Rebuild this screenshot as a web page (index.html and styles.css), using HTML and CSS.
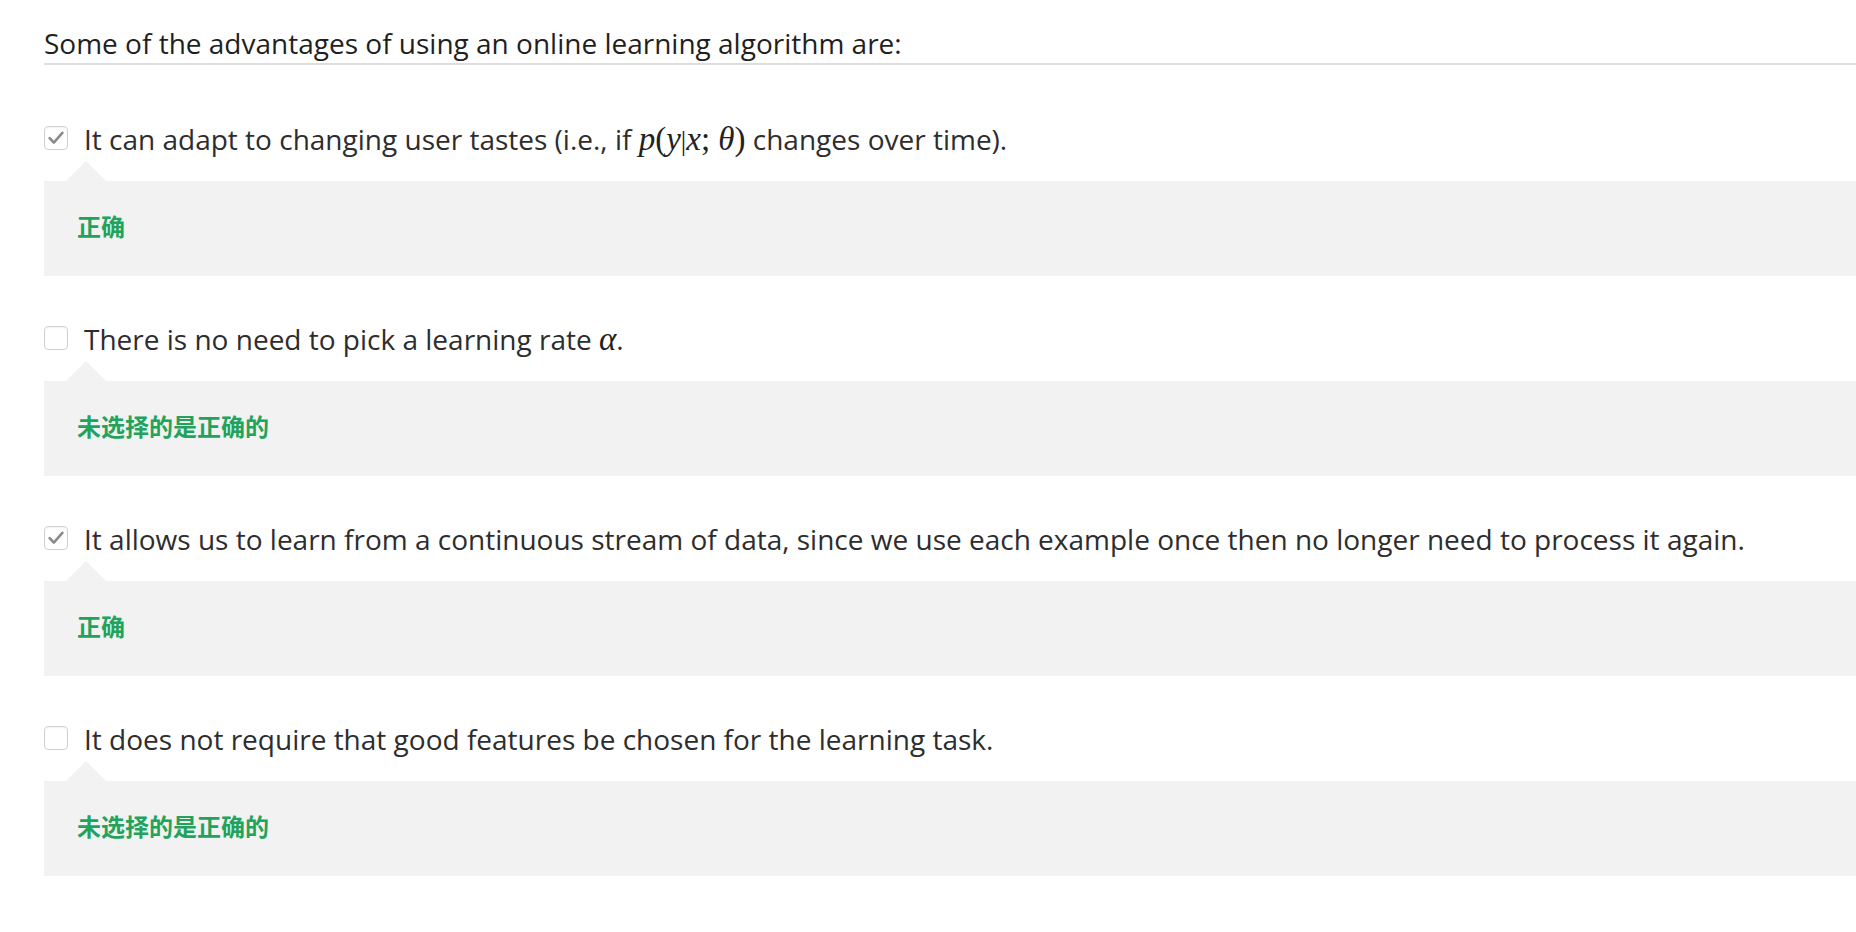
FILE: index.html
```html
<!DOCTYPE html>
<html lang="en">
<head>
<meta charset="utf-8">
<title>Quiz</title>
<link rel="stylesheet" href="styles.css">
</head>
<body>
<div class="page">
  <div class="question">Some of the advantages of using an online learning algorithm are:</div>

  <div class="option">
    <div class="option-row">
      <span class="checkbox"><svg viewBox="1 1 22 22" width="22" height="22"><path d="M5.6 12.2 L9.8 16.6 L18.4 6.8" fill="none" stroke="#8a8a8a" stroke-width="2.6" stroke-linecap="round" stroke-linejoin="round"/></svg></span>
      <span class="option-text">It can adapt to changing user tastes (i.e., if <span class="math"><i>p</i>(<i>y</i><span class="bar">|</span><i>x</i>; <i>θ</i>)</span> changes over time).</span>
    </div>
    <div class="feedback">正确</div>
  </div>

  <div class="option">
    <div class="option-row">
      <span class="checkbox"></span>
      <span class="option-text">There is no need to pick a learning rate <span class="math"><i>α</i></span>.</span>
    </div>
    <div class="feedback">未选择的是正确的</div>
  </div>

  <div class="option">
    <div class="option-row">
      <span class="checkbox"><svg viewBox="1 1 22 22" width="22" height="22"><path d="M5.6 12.2 L9.8 16.6 L18.4 6.8" fill="none" stroke="#8a8a8a" stroke-width="2.6" stroke-linecap="round" stroke-linejoin="round"/></svg></span>
      <span class="option-text">It allows us to learn from a continuous stream of data, since we use each example once then no longer need to process it again.</span>
    </div>
    <div class="feedback">正确</div>
  </div>

  <div class="option">
    <div class="option-row">
      <span class="checkbox"></span>
      <span class="option-text">It does not require that good features be chosen for the learning task.</span>
    </div>
    <div class="feedback">未选择的是正确的</div>
  </div>
</div>
</body>
</html>
```

FILE: styles.css
```css
html, body {
  margin: 0;
  padding: 0;
  background: #ffffff;
}

body {
  font-family: "Open Sans", "Noto Sans", "Noto Sans CJK SC", sans-serif;
  color: #333333;
  overflow: hidden;
}

.page {
  padding-left: 44px;
}

.question {
  font-size: 28px;
  line-height: 38px;
  color: #1f1f1f;
  padding-top: 24px;
  padding-bottom: 1px;
  border-bottom: 2px solid #dddddd;
  margin-bottom: 54px;
}

.option {
  margin-bottom: 43px;
}

.option-row {
  display: flex;
  align-items: flex-start;
  gap: 16px;
  font-size: 28px;
  line-height: 38px;
  height: 38px;
  color: #2d2d2d;
  padding-top: 1px;
}

.checkbox {
  flex: none;
  box-sizing: border-box;
  width: 24px;
  height: 24px;
  margin-top: 6px;
  border: 1px solid #d2d2d2;
  border-radius: 4px;
  background: #ffffff;
  box-shadow: inset 0 1px 2px rgba(0, 0, 0, 0.06);
}

.checkbox svg {
  display: block;
}

.math {
  font-family: "Liberation Serif", "DejaVu Serif", serif;
  font-size: 33px;
  line-height: 0;
  color: #222222;
}

.math i {
  font-style: italic;
}

.math .bar {
  font-size: 27px;
}

.feedback {
  position: relative;
  margin-top: 23px;
  background: #f2f2f2;
  padding: 27px 33px 33px;
  height: 35px;
  font-family: "Noto Sans CJK SC", "Noto Sans", sans-serif;
  font-size: 24px;
  line-height: 35px;
  font-weight: 700;
  color: #22a35c;
}

.feedback::before {
  content: "";
  position: absolute;
  left: 22px;
  top: -20px;
  width: 0;
  height: 0;
  border-left: 20px solid transparent;
  border-right: 20px solid transparent;
  border-bottom: 20px solid #f2f2f2;
}
```
